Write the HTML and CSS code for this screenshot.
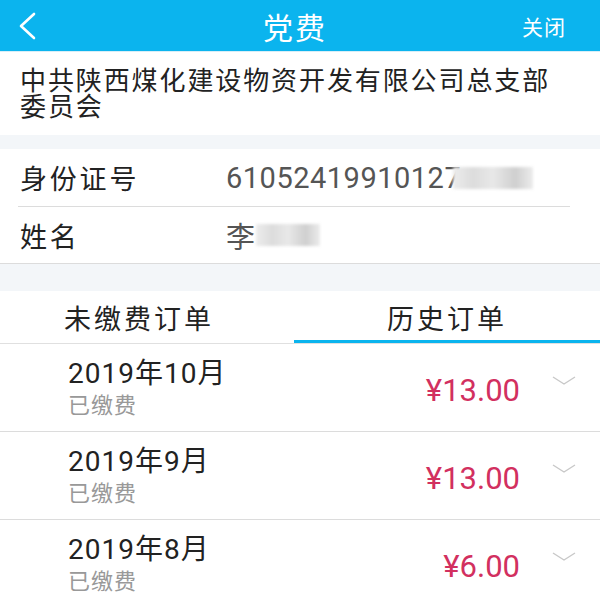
FILE: index.html
```html
<!DOCTYPE html>
<html lang="zh">
<head>
<meta charset="utf-8">
<title>党费</title>
<link rel="stylesheet" href="styles.css">
</head>
<body>
<div class="page">
  <header class="topbar">
    <span class="back">
      <svg width="22" height="28" viewBox="0 0 22 28"><path d="M17 2 L4 14 L17 26" fill="none" stroke="#fff" stroke-width="2.6" stroke-linecap="round" stroke-linejoin="round"/></svg>
    </span>
    <h1 class="title">党费</h1>
    <span class="close">关闭</span>
  </header>

  <section class="org">中共陕西煤化建设物资开发有限公司总支部委员会</section>

  <div class="gap gap-small"></div>

  <section class="info">
    <div class="info-row">
      <span class="label">身份证号</span>
      <span class="value">6105241991012<span class="partial">7</span><span class="blur blur-id"></span></span>
    </div>
    <div class="info-row">
      <span class="label">姓名</span>
      <span class="value">李<span class="blur blur-name"></span></span>
    </div>
  </section>

  <div class="gap gap-large"></div>

  <nav class="tabs">
    <div class="tab tab-left">未缴费订单</div>
    <div class="tab tab-right active">历史订单</div>
  </nav>

  <ul class="orders">
    <li class="order">
      <div class="order-main">
        <div class="order-date">2019年10月</div>
        <div class="order-status">已缴费</div>
      </div>
      <div class="order-price">¥13.00</div>
      <svg class="chev" width="24" height="12" viewBox="0 0 24 12"><path d="M1 2 L12 9 L23 2" fill="none" stroke="#c8c8c8" stroke-width="1.4"/></svg>
    </li>
    <li class="order">
      <div class="order-main">
        <div class="order-date">2019年9月</div>
        <div class="order-status">已缴费</div>
      </div>
      <div class="order-price">¥13.00</div>
      <svg class="chev" width="24" height="12" viewBox="0 0 24 12"><path d="M1 2 L12 9 L23 2" fill="none" stroke="#c8c8c8" stroke-width="1.4"/></svg>
    </li>
    <li class="order">
      <div class="order-main">
        <div class="order-date">2019年8月</div>
        <div class="order-status">已缴费</div>
      </div>
      <div class="order-price">¥6.00</div>
      <svg class="chev" width="24" height="12" viewBox="0 0 24 12"><path d="M1 2 L12 9 L23 2" fill="none" stroke="#c8c8c8" stroke-width="1.4"/></svg>
    </li>
  </ul>
</div>
</body>
</html>
```

FILE: styles.css
```css
* { box-sizing: border-box; }
html, body { margin: 0; padding: 0; background: #fff; }
body {
  font-family: "Roboto", "Noto Sans CJK SC", sans-serif;
  color: #222;
  width: 600px;
  height: 600px;
  overflow: hidden;
}
.page { display: flex; flex-direction: column; }

.topbar {
  height: 52px;
  background: #0bb4ee;
  display: flex;
  align-items: center;
  justify-content: space-between;
  padding: 0 34px 0 17px;
  position: relative;
  border-bottom: 1px solid #d8eef7;
}
.back { display: flex; align-items: center; width: 40px; }
.title {
  margin: 0;
  font-family: "Noto Sans CJK SC", sans-serif;
  font-weight: 400;
  font-size: 30px;
  color: #fff;
  letter-spacing: 2px;
  position: absolute;
  left: 0; right: 10px;
  text-align: center;
  pointer-events: none;
}
.close {
  font-family: "Noto Sans CJK SC", sans-serif;
  font-size: 21px;
  letter-spacing: 1px;
  color: #fff;
}

.org {
  padding: 14px 40px 17px 20px;
  font-family: "Noto Sans CJK SC", sans-serif;
  font-size: 26px;
  line-height: 26px;
  letter-spacing: 1.9px;
  color: #222;
}

.gap { background: #f3f6f9; }
.gap-small { height: 14px; }
.gap-large { height: 27px; }

.info { border-bottom: 1px solid #dcdcdc; }
.info-row {
  height: 57px;
  display: flex;
  align-items: center;
  margin: 0 30px 0 18px;
  padding-left: 2px;
  font-family: "Noto Sans CJK SC", sans-serif;
}
.info-row + .info-row { border-top: 1px solid #dcdcdc; }
.label {
  width: 206px;
  font-size: 27px;
  letter-spacing: 2.8px;
  color: #222;
}
.value {
  font-family: "Roboto", "Noto Sans CJK SC", sans-serif;
  font-size: 29px;
  letter-spacing: 0.5px;
  color: #555;
  display: flex;
  align-items: center;
}
.partial { margin-right: -8px; }
.blur {
  display: inline-block;
  height: 22px;
  background: linear-gradient(90deg, #ececec, #dcdcdc 25%, #e8e8e8 50%, #cfcfcf 78%, #ececec);
  filter: blur(1.5px);
}
.blur-id { width: 80px; }
.blur-name { width: 64px; }

.tabs {
  display: flex;
  height: 53px;
  border-bottom: 1px solid #e0e0e0;
}
.tab {
  display: flex;
  align-items: center;
  justify-content: center;
  font-family: "Noto Sans CJK SC", sans-serif;
  font-size: 27px;
  letter-spacing: 3px;
  color: #222;
  padding-top: 4px;
  border-bottom: 3px solid transparent;
}
.tab-left { width: 294px; padding-right: 16px; }
.tab-right { flex: 1; }
.tab.active { border-bottom-color: #0bb4ee; }

.orders { list-style: none; margin: 0; padding: 0; }
.order {
  height: 88px;
  display: flex;
  align-items: center;
  padding-left: 68px;
  border-bottom: 1px solid #dcdcdc;
}
.order-main { flex: 1; }
.order-date {
  font-family: "Roboto", "Noto Sans CJK SC", sans-serif;
  font-size: 28px;
  letter-spacing: 1px;
  line-height: 30px;
  color: #222;
}
.order-status {
  font-family: "Noto Sans CJK SC", sans-serif;
  font-size: 22px;
  letter-spacing: 1px;
  line-height: 28px;
  color: #999;
}
.order-price {
  font-family: "Roboto", sans-serif;
  font-size: 31px;
  color: #d2305f;
  padding-top: 6px;
}
.chev { margin: 0 24px 14px 32px; }
```
